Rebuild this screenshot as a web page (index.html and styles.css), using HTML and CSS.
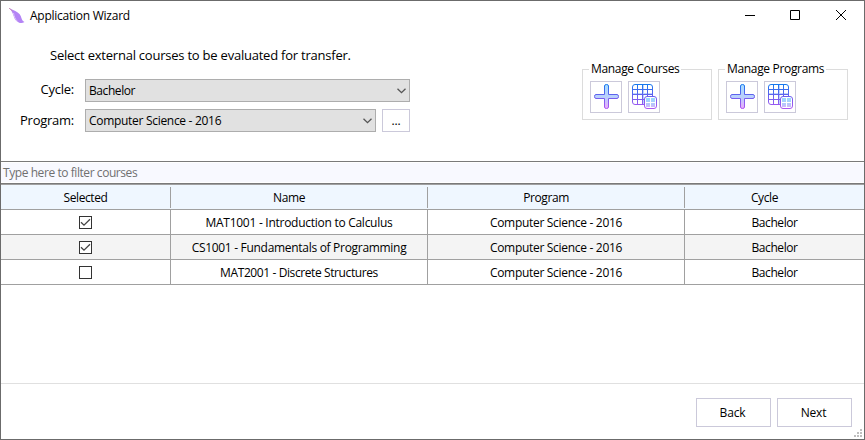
FILE: index.html
```
<!DOCTYPE html>
<html lang="en">
<head>
<meta charset="utf-8">
<title>Application Wizard</title>
<link rel="stylesheet" href="styles.css">
</head>
<body>
<svg class="defs" width="0" height="0" aria-hidden="true">
  <defs>
    <linearGradient id="line" gradientUnits="userSpaceOnUse" x1="0" y1="0" x2="0" y2="26"><stop offset="0" stop-color="#1479ee"/><stop offset=".45" stop-color="#6660ee"/><stop offset="1" stop-color="#b456f2"/></linearGradient>
    <linearGradient id="fill" gradientUnits="userSpaceOnUse" x1="0" y1="0" x2="0" y2="26"><stop offset="0" stop-color="#a6dcff"/><stop offset=".5" stop-color="#b9d0fc"/><stop offset="1" stop-color="#efa6fa"/></linearGradient>
    <linearGradient id="panes" gradientUnits="userSpaceOnUse" x1="0" y1="14" x2="0" y2="25"><stop offset="0" stop-color="#98dcff"/><stop offset=".55" stop-color="#b4c8fc"/><stop offset="1" stop-color="#e8acfa"/></linearGradient>
    <symbol id="plus" viewBox="0 0 26 26"><path d="M11.500 2Q11.500.5 13.500.5T15.500 2V10.500H24Q25.500 10.500 25.500 12.500T24 14.500H15.500V23Q15.500 24.500 13.500 24.500T11.500 23V14.500H3Q1.500 14.500 1.500 12.500T3 10.500H11.500Z" fill="url(#fill)" stroke="url(#line)"/></symbol>
    <symbol id="grid" viewBox="0 0 26 26"><path d="M12 1v19M2 10h19" stroke="#bcd4fc" stroke-width="2"/><path d="M13.500 20.500H4Q1.500 20.500 1.500 18V3Q1.500.5 4 .5H19Q21.500.5 21.500 3V12.500M6.500.5v20M11.500.5v20M16.500.5v12M1.500 5.500h20M1.500 10.500h20M1.500 15.500h12" fill="none" stroke="url(#line)"/><rect x="13.500" y="12.500" width="12" height="12" rx="2.500" fill="#fff" stroke="url(#line)"/><path d="M15 14h4v4h-4zM20 14h4v4h-4zM15 19h4v4h-4zM20 19h4v4h-4z" fill="url(#panes)"/></symbol>
    <symbol id="chevron" viewBox="0 0 9 6"><path d="M.5.7 4.500 4.700 8.500.7" fill="none" stroke="#555" stroke-width="1.300"/></symbol>
    <symbol id="box" viewBox="0 0 13 13"><rect x=".5" y=".5" width="12" height="12" fill="#fff" stroke="#333"/></symbol>
    <symbol id="checked" viewBox="0 0 13 13"><rect x=".5" y=".5" width="12" height="12" fill="#fff" stroke="#333"/><path d="M2 6.200 5 9.200 11 3.200" fill="none" stroke="#444" stroke-width="1.300"/></symbol>
  </defs>
</svg>
<div class="window">
  <header class="titlebar">
    <svg class="logo" width="16" height="16" viewBox="0 0 16 16"><path d="M0 0C4 2.500 8 3 10.500 6C13 9 12 12.500 15.500 14C13 16 9 15 7 12.500C4 9 5 5 0 0Z" fill="#b484f5"/><path d="M0 0 3.500 3" stroke="#c88fb4"/><path d="M4.500 5C5 8 6 11 8.500 13.500" fill="none" stroke="#dcc0fa"/></svg>
    <span class="title">Application Wizard</span>
    <svg class="controls" width="102" height="12" viewBox="0 0 102 12"><path d="M0 6.500h10M45.500 1.500h9v9h-9zM91 1l10 10M101 1 91 11" fill="none" stroke="#000"/></svg>
  </header>
  <section class="top">
    <div class="form">
      <p class="intro">Select external courses to be evaluated for transfer.</p>
      <div class="field"><label class="cycle">Cycle:</label><div class="select"><span class="bach">Bachelor</span><svg width="9" height="6"><use href="#chevron"/></svg></div></div>
      <div class="field"><label class="program">Program:</label><div class="select"><span class="cs">Computer Science - 2016</span><svg width="9" height="6"><use href="#chevron"/></svg></div><button class="more">...</button></div>
    </div>
    <div class="groups">
      <fieldset><legend>Manage Courses</legend><button class="tool"><svg width="26" height="26"><use href="#plus"/></svg></button><button class="tool"><svg width="26" height="26"><use href="#grid"/></svg></button></fieldset>
      <fieldset><legend>Manage Programs</legend><button class="tool"><svg width="26" height="26"><use href="#plus"/></svg></button><button class="tool"><svg width="26" height="26"><use href="#grid"/></svg></button></fieldset>
    </div>
  </section>
  <div class="filter"><span>Type here to filter courses</span></div>
  <div class="row head"><div><span>Selected</span></div><div><span>Name</span></div><div><span>Program</span></div><div><span>Cycle</span></div></div>
  <div class="row"><div><svg width="13" height="13"><use href="#checked"/></svg></div><div><span>MAT1001 - Introduction to Calculus</span></div><div><span class="cs">Computer Science - 2016</span></div><div><span class="bach">Bachelor</span></div></div>
  <div class="row alt"><div><svg width="13" height="13"><use href="#checked"/></svg></div><div><span class="cs">CS1001 - Fundamentals of Programming</span></div><div><span class="cs">Computer Science - 2016</span></div><div><span class="bach">Bachelor</span></div></div>
  <div class="row"><div><svg width="13" height="13"><use href="#box"/></svg></div><div><span class="discrete">MAT2001 - Discrete Structures</span></div><div><span class="cs">Computer Science - 2016</span></div><div><span class="bach">Bachelor</span></div></div>
  <footer><button>Back</button><button>Next</button>
    <svg class="grip" width="8" height="8" viewBox="0 0 8 8"><path d="M6 0h2v2H6zM3 3h2v2H3zM6 3h2v2H6zM0 6h2v2H0zM3 6h2v2H3zM6 6h2v2H6z" fill="#bfbfbf"/></svg>
  </footer>
</div>
</body>
</html>
```
FILE: styles.css
```
* { box-sizing: border-box; }
body { margin: 0; font: 12px/16px "Open Sans", "Noto Sans", sans-serif; color: #000; }
button { font: inherit; color: inherit; background: #fff; border: 1px solid #cbc9da; padding: 0; letter-spacing: -.15px; }
svg { display: block; flex: none; }
span, legend, label { white-space: nowrap; }
.defs { position: absolute; }
.window { width: 865px; height: 440px; border: 1px solid #6b6b6b; background: #fff; display: flex; flex-direction: column; }
.titlebar { height: 30px; display: flex; align-items: center; padding: 0 17px 0 8px; flex: none; }
.title { margin-left: 5px; letter-spacing: -.25px; }
.controls { margin-left: auto; margin-top: -2px; }
.top { height: 130px; display: flex; justify-content: space-between; flex: none; }
.form { width: 409px; }
.intro { margin: 16px 0 15px 49px; font-size: 13px; line-height: 17px; letter-spacing: -.225px; white-space: nowrap; }
.field { display: flex; height: 23px; margin-bottom: 7px; }
.field label { width: 84px; padding-right: 11px; text-align: right; font-size: 13px; line-height: 20px; letter-spacing: -.25px; }
.field .program { line-height: 22px; }
.select { flex: 1; display: flex; align-items: center; justify-content: space-between; background: #e1e1e1; border: 1px solid #adadad; padding: 0 3px; }
.select span { padding-top: 1px; }
.more { width: 28px; margin-left: 6px; }
.cs { letter-spacing: -.3px; }
.bach { letter-spacing: -.42px; }
.discrete { letter-spacing: -.4px; }
.groups { display: flex; gap: 6px; padding: 30px 16px 0 0; }
fieldset { width: 130px; height: 59px; margin: 0; border: 1px solid #dcdcdc; padding: 4px 7px 0; display: flex; gap: 6px; min-width: 0; }
legend { padding: 0 2px; margin-left: -1px; line-height: 16px; letter-spacing: -.33px; }
.tool { width: 32px; height: 32px; display: flex; align-items: center; justify-content: center; }
.filter { height: 24px; flex: none; border-top: 1px solid #7a7a7a; border-bottom: 1px solid #a0a0a0; background: #f8f9ff; color: #707070; padding: 2px; box-shadow: inset 0 1px #fff, inset 0 -1px #7a7a7a, inset 0 -2px #fff; line-height: 17px; letter-spacing: -.43px; }
.row { display: grid; grid-template-columns: 170px 257px 257px 1fr; height: 25px; flex: none; border-bottom: 1px solid #a0a0a0; letter-spacing: -.27px; }
.row > div { display: flex; align-items: center; justify-content: center; border-right: 1px solid #a0a0a0; }
.row > div:last-child { border-right: 0; }
.row span { padding-top: 2px; }
.alt { background: #f4f4f4; }
.head { background: #eff7ff; letter-spacing: -.4px; }
.head > div { margin: 2px 0 1px; }
.head > div:not(:first-child) { padding-right: 20px; }
.head span { padding-top: 1px; }
footer { position: relative; margin-top: auto; height: 56px; border-top: 1px solid #e0e0e0; display: flex; justify-content: flex-end; gap: 6px; padding: 14px 14px 0 0; padding-right: 12px; }
footer button { width: 75px; height: 29px; padding-right: 2px; }
.grip { position: absolute; right: 2px; bottom: 2px; }
```
